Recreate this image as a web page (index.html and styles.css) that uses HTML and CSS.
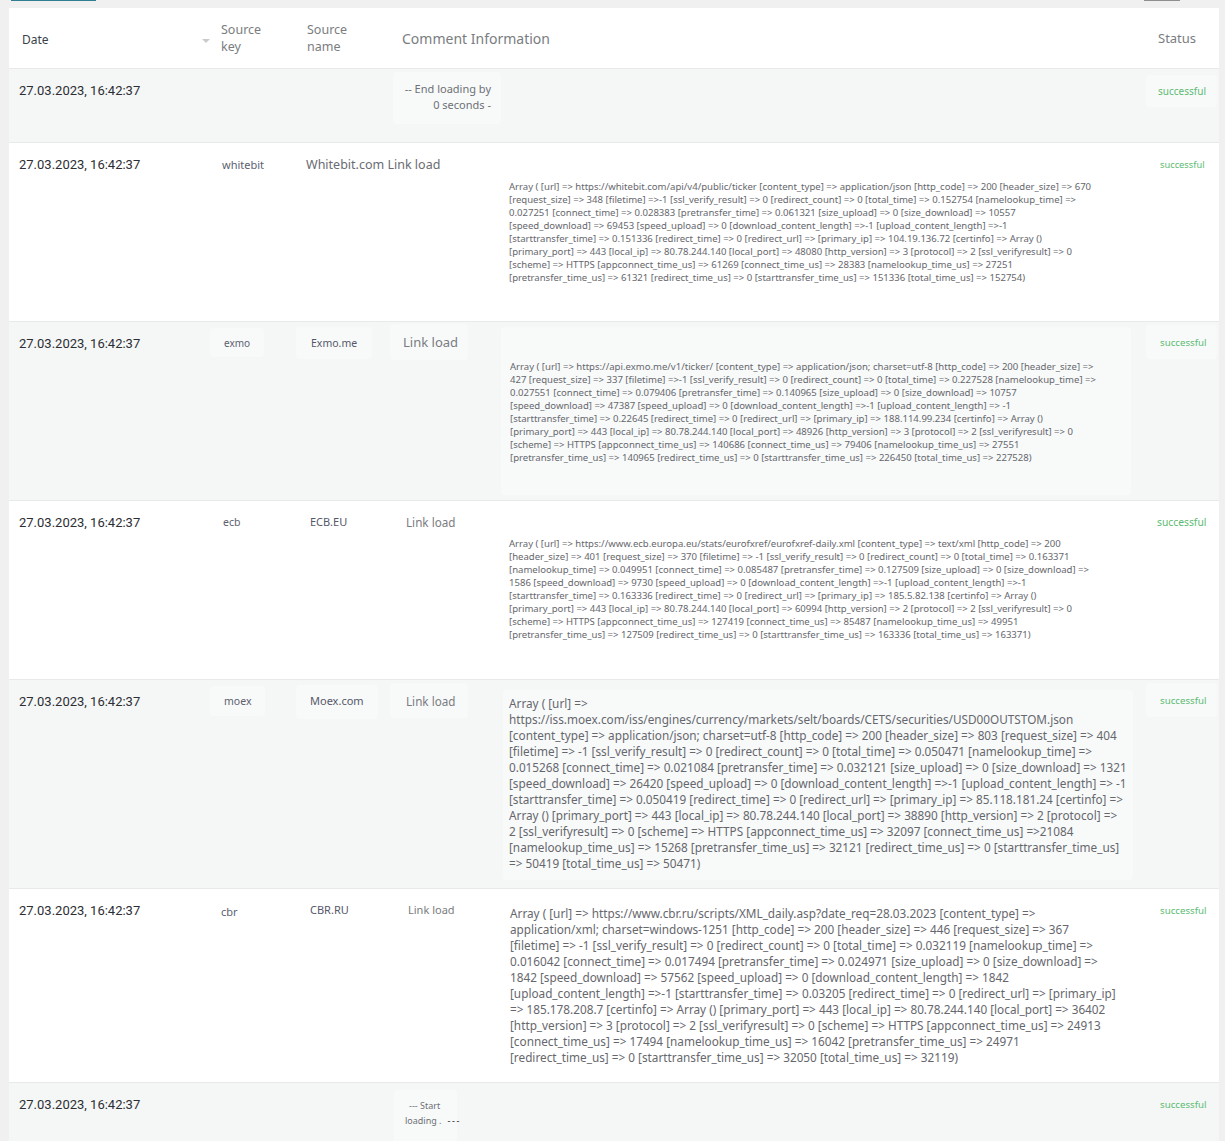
FILE: index.html
```html
<!DOCTYPE html>
<html lang="en">
<head>
<meta charset="utf-8">
<title>Loading log</title>
<link rel="stylesheet" href="styles.css">
</head>
<body>
<div class="stubs"><span class="stub stub-teal"></span><span class="stub stub-gray"></span></div>
<main class="table">
  <div class="row head">
    <div class="h-date">Date<span class="caret"></span></div>
    <div class="h-src">Source<br>key</div>
    <div class="h-src h-name">Source<br>name</div>
    <div class="h-comment">Comment Information</div>
    <div class="h-status">Status</div>
  </div>

  <div class="row alt r1">
    <div class="date">27.03.2023, 16:42:37</div>
    <div></div>
    <div></div>
    <div class="end-wrap"><span class="patch end">-- End loading by<br>0 seconds -</span></div>
    <div class="status-wrap"><span class="patch status s-a">successful</span></div>
  </div>

  <div class="row r2">
    <div class="date">27.03.2023, 16:42:37</div>
    <div class="key k-wb">whitebit</div>
    <div class="wb-name">Whitebit.com Link load</div>
    <div class="log small log-wb">Array ( [url] =&gt; https://whitebit.com/api/v4/public/ticker [content_type] =&gt; application/json [http_code] =&gt; 200 [header_size] =&gt; 670<br>[request_size] =&gt; 348 [filetime] =&gt;-1 [ssl_verify_result] =&gt; 0 [redirect_count] =&gt; 0 [total_time] =&gt; 0.152754 [namelookup_time] =&gt;<br>0.027251 [connect_time] =&gt; 0.028383 [pretransfer_time] =&gt; 0.061321 [size_upload] =&gt; 0 [size_download] =&gt; 10557<br>[speed_download] =&gt; 69453 [speed_upload] =&gt; 0 [download_content_length] =&gt;-1 [upload_content_length] =&gt;-1<br>[starttransfer_time] =&gt; 0.151336 [redirect_time] =&gt; 0 [redirect_url] =&gt; [primary_ip] =&gt; 104.19.136.72 [certinfo] =&gt; Array ()<br>[primary_port] =&gt; 443 [local_ip] =&gt; 80.78.244.140 [local_port] =&gt; 48080 [http_version] =&gt; 3 [protocol] =&gt; 2 [ssl_verifyresult] =&gt; 0<br>[scheme] =&gt; HTTPS [appconnect_time_us] =&gt; 61269 [connect_time_us] =&gt; 28383 [namelookup_time_us] =&gt; 27251<br>[pretransfer_time_us] =&gt; 61321 [redirect_time_us] =&gt; 0 [starttransfer_time_us] =&gt; 151336 [total_time_us] =&gt; 152754)</div>
    <div class="status-wrap"><span class="status s-b">successful</span></div>
  </div>

  <div class="row alt r3">
    <div class="date">27.03.2023, 16:42:37</div>
    <div class="key-wrap"><span class="patch key k-ex">exmo</span></div>
    <div class="name-wrap"><span class="patch name n-ex">Exmo.me</span></div>
    <div class="comment-col">
      <span class="patch link l-ex">Link load</span>
      <div class="patch log small log-ex">Array ( [url] =&gt; https://api.exmo.me/v1/ticker/ [content_type] =&gt; application/json; charset=utf-8 [http_code] =&gt; 200 [header_size] =&gt;<br>427 [request_size] =&gt; 337 [filetime] =&gt;-1 [ssl_verify_result] =&gt; 0 [redirect_count] =&gt; 0 [total_time] =&gt; 0.227528 [namelookup_time] =&gt;<br>0.027551 [connect_time] =&gt; 0.079406 [pretransfer_time] =&gt; 0.140965 [size_upload] =&gt; 0 [size_download] =&gt; 10757<br>[speed_download] =&gt; 47387 [speed_upload] =&gt; 0 [download_content_length] =&gt;-1 [upload_content_length] =&gt; -1<br>[starttransfer_time] =&gt; 0.22645 [redirect_time] =&gt; 0 [redirect_url] =&gt; [primary_ip] =&gt; 188.114.99.234 [certinfo] =&gt; Array ()<br>[primary_port] =&gt; 443 [local_ip] =&gt; 80.78.244.140 [local_port] =&gt; 48926 [http_version] =&gt; 3 [protocol] =&gt; 2 [ssl_verifyresult] =&gt; 0<br>[scheme] =&gt; HTTPS [appconnect_time_us] =&gt; 140686 [connect_time_us] =&gt; 79406 [namelookup_time_us] =&gt; 27551<br>[pretransfer_time_us] =&gt; 140965 [redirect_time_us] =&gt; 0 [starttransfer_time_us] =&gt; 226450 [total_time_us] =&gt; 227528)</div>
    </div>
    <div class="status-wrap"><span class="patch status s-c">successful</span></div>
  </div>

  <div class="row r4">
    <div class="date">27.03.2023, 16:42:37</div>
    <div class="key k-ec">ecb</div>
    <div class="name n-ec">ECB.EU</div>
    <div class="comment-col">
      <span class="link l-ec">Link load</span>
      <div class="log small log-ec">Array ( [url] =&gt; https://www.ecb.europa.eu/stats/eurofxref/eurofxref-daily.xml [content_type] =&gt; text/xml [http_code] =&gt; 200<br>[header_size] =&gt; 401 [request_size] =&gt; 370 [filetime] =&gt; -1 [ssl_verify_result] =&gt; 0 [redirect_count] =&gt; 0 [total_time] =&gt; 0.163371<br>[namelookup_time] =&gt; 0.049951 [connect_time] =&gt; 0.085487 [pretransfer_time] =&gt; 0.127509 [size_upload] =&gt; 0 [size_download] =&gt;<br>1586 [speed_download] =&gt; 9730 [speed_upload] =&gt; 0 [download_content_length] =&gt;-1 [upload_content_length] =&gt;-1<br>[starttransfer_time] =&gt; 0.163336 [redirect_time] =&gt; 0 [redirect_url] =&gt; [primary_ip] =&gt; 185.5.82.138 [certinfo] =&gt; Array ()<br>[primary_port] =&gt; 443 [local_ip] =&gt; 80.78.244.140 [local_port] =&gt; 60994 [http_version] =&gt; 2 [protocol] =&gt; 2 [ssl_verifyresult] =&gt; 0<br>[scheme] =&gt; HTTPS [appconnect_time_us] =&gt; 127419 [connect_time_us] =&gt; 85487 [namelookup_time_us] =&gt; 49951<br>[pretransfer_time_us] =&gt; 127509 [redirect_time_us] =&gt; 0 [starttransfer_time_us] =&gt; 163336 [total_time_us] =&gt; 163371)</div>
    </div>
    <div class="status-wrap"><span class="status s-d">successful</span></div>
  </div>

  <div class="row alt r5">
    <div class="date">27.03.2023, 16:42:37</div>
    <div class="key-wrap"><span class="patch key k-mo">moex</span></div>
    <div class="name-wrap"><span class="patch name n-mo">Moex.com</span></div>
    <div class="comment-col">
      <span class="patch link l-mo">Link load</span>
      <div class="patch log large log-mo">Array ( [url] =&gt;<br>https://iss.moex.com/iss/engines/currency/markets/selt/boards/CETS/securities/USD00OUTSTOM.json<br>[content_type] =&gt; application/json; charset=utf-8 [http_code] =&gt; 200 [header_size] =&gt; 803 [request_size] =&gt; 404<br>[filetime] =&gt; -1 [ssl_verify_result] =&gt; 0 [redirect_count] =&gt; 0 [total_time] =&gt; 0.050471 [namelookup_time] =&gt;<br>0.015268 [connect_time] =&gt; 0.021084 [pretransfer_time] =&gt; 0.032121 [size_upload] =&gt; 0 [size_download] =&gt; 1321<br>[speed_download] =&gt; 26420 [speed_upload] =&gt; 0 [download_content_length] =&gt;-1 [upload_content_length] =&gt; -1<br>[starttransfer_time] =&gt; 0.050419 [redirect_time] =&gt; 0 [redirect_url] =&gt; [primary_ip] =&gt; 85.118.181.24 [certinfo] =&gt;<br>Array () [primary_port] =&gt; 443 [local_ip] =&gt; 80.78.244.140 [local_port] =&gt; 38890 [http_version] =&gt; 2 [protocol] =&gt;<br>2 [ssl_verifyresult] =&gt; 0 [scheme] =&gt; HTTPS [appconnect_time_us] =&gt; 32097 [connect_time_us] =&gt;21084<br>[namelookup_time_us] =&gt; 15268 [pretransfer_time_us] =&gt; 32121 [redirect_time_us] =&gt; 0 [starttransfer_time_us]<br>=&gt; 50419 [total_time_us] =&gt; 50471)</div>
    </div>
    <div class="status-wrap"><span class="patch status s-e">successful</span></div>
  </div>

  <div class="row r6">
    <div class="date">27.03.2023, 16:42:37</div>
    <div class="key k-cb">cbr</div>
    <div class="name n-cb">CBR.RU</div>
    <div class="comment-col">
      <span class="link l-cb">Link load</span>
      <div class="log large log-cb">Array ( [url] =&gt; https://www.cbr.ru/scripts/XML_daily.asp?date_req=28.03.2023 [content_type] =&gt;<br>application/xml; charset=windows-1251 [http_code] =&gt; 200 [header_size] =&gt; 446 [request_size] =&gt; 367<br>[filetime] =&gt; -1 [ssl_verify_result] =&gt; 0 [redirect_count] =&gt; 0 [total_time] =&gt; 0.032119 [namelookup_time] =&gt;<br>0.016042 [connect_time] =&gt; 0.017494 [pretransfer_time] =&gt; 0.024971 [size_upload] =&gt; 0 [size_download] =&gt;<br>1842 [speed_download] =&gt; 57562 [speed_upload] =&gt; 0 [download_content_length] =&gt; 1842<br>[upload_content_length] =&gt;-1 [starttransfer_time] =&gt; 0.03205 [redirect_time] =&gt; 0 [redirect_url] =&gt; [primary_ip]<br>=&gt; 185.178.208.7 [certinfo] =&gt; Array () [primary_port] =&gt; 443 [local_ip] =&gt; 80.78.244.140 [local_port] =&gt; 36402<br>[http_version] =&gt; 3 [protocol] =&gt; 2 [ssl_verifyresult] =&gt; 0 [scheme] =&gt; HTTPS [appconnect_time_us] =&gt; 24913<br>[connect_time_us] =&gt; 17494 [namelookup_time_us] =&gt; 16042 [pretransfer_time_us] =&gt; 24971<br>[redirect_time_us] =&gt; 0 [starttransfer_time_us] =&gt; 32050 [total_time_us] =&gt; 32119)</div>
    </div>
    <div class="status-wrap"><span class="status s-f">successful</span></div>
  </div>

  <div class="row alt r7">
    <div class="date">27.03.2023, 16:42:37</div>
    <div></div>
    <div></div>
    <div class="start-wrap"><span class="patch start"><span class="start-top">--- Start</span><br>loading .<span class="tail"> ---</span></span></div>
    <div class="status-wrap"><span class="status s-g">successful</span></div>
  </div>
</main>
</body>
</html>
```
FILE: styles.css
```css
* { box-sizing: border-box; }
html, body { margin: 0; padding: 0; }
body {
  height: 1141px;
  overflow: hidden;
  background: #f0f0f0;
  font-family: "Noto Sans", "Open Sans", sans-serif;
  color: #666;
}
.stubs {
  height: 8px;
  display: flex;
  justify-content: space-between;
  align-items: flex-start;
  padding: 0 45px 0 11px;
}
.stub { display: block; height: 1px; }
.stub-teal { width: 85px; background: #2f7f90; }
.stub-gray { width: 36px; background: #8f8f8f; }
.table { width: 1210px; margin-left: 9px; background: #fff; }
.row {
  display: grid;
  grid-template-columns: 200px 88px 96px 752px 74px;
  border-bottom: 1px solid #e8eaea;
  background: #fff;
}
.alt { background: #f5f7f7; }
.head { height: 61px; }
.r1 { height: 74px; }
.r2, .r3, .r4 { height: 179px; }
.r5 { height: 209px; }
.r6 { height: 194px; }
.r7 { height: 58px; border-bottom: 0; }

.patch { background: #f8fafa; border-radius: 4px; }

.h-date { position: relative; padding: 24px 0 0 13px; font-size: 12px; line-height: 16px; color: #3a3f4a; }
.caret {
  position: absolute; left: 193px; top: 31px; width: 0; height: 0;
  border-left: 4px solid transparent; border-right: 4px solid transparent;
  border-top: 4px solid #c9cbce;
}
.h-src { padding: 13px 0 0 12px; font-size: 12.5px; line-height: 17px; color: #7a7d80; }
.h-name { padding-left: 10px; }
.h-comment { padding: 21px 0 0 9px; font-size: 14px; line-height: 20px; color: #7a7d80; }
.h-status { padding: 21px 0 0 13px; font-size: 13px; line-height: 18px; color: #7a7d80; }

.date { padding: 14px 0 0 10px; font: 13px/16px Roboto, sans-serif; color: #2c2e33; }

.key { font-size: 10.5px; line-height: 15px; color: #5d5f70; display: block; }
.name { font-size: 10.5px; line-height: 16px; color: #55586a; display: block; }
.link { font-size: 11.7px; line-height: 16px; color: #7a7c80; display: block; }
.key-wrap, .name-wrap { display: flex; align-items: flex-start; }

.k-wb { padding: 14px 0 0 13px; font-size: 11px; }
.wb-name { padding-top: 13px; margin-left: 9px; font-size: 12.5px; line-height: 17px; color: #6a6c72; white-space: nowrap; }

.k-ex { margin: 6px 0 0 1px; padding: 8px 14px 6px 14px; font-size: 10px; }
.n-ex { margin: 5px 0 0 -1px; padding: 8px 15px; }
.l-ex { font-size: 13px; line-height: 18px; width: 78px; margin: 2px 0 0 -3px; padding: 9px 0 9px 13px; }
.log-ex { margin: -33px 0 0 108px; width: 630px; padding: 33px 0 0 9px; height: 168px; }

.k-ec { padding: 14px 0 0 14px; }
.n-ec { padding: 13px 0 0 13px; font-size: 11px; }
.l-ec { padding: 13px 0 0 13px; }
.log-ec { margin-top: 7px; margin-left: 116px; }

.k-mo { margin: 6px 0 0 1px; padding: 8px 14px 7px 14px; }
.n-mo { margin: 5px 0 0 -1px; padding: 8px 14px 10px 14px; font-size: 11px; }
.l-mo { width: 78px; margin: 3px 0 0 -3px; padding: 10px 0 9px 16px; }
.log-mo { margin: -28px 0 0 110px; width: 630px; padding: 5px 0 0 6px; height: 190px; }

.k-cb { padding: 15px 0 0 12px; font-size: 11px; }
.n-cb { padding: 13px 0 0 13px; font-size: 11px; }
.l-cb { padding: 13px 0 0 15px; font-size: 11px; }
.log-cb { margin-top: -13px; margin-left: 117px; }

.log { white-space: nowrap; color: #66676d; }
.small { font-size: 9.55px; line-height: 13px; }
.large { font-size: 11.78px; line-height: 16px; }
.log-wb { grid-column: 4; padding: 37px 0 0 116px; }

.end-wrap { padding: 3px 0 0 0; display: flex; align-items: flex-start; }
.end {
  display: block; width: 108px; padding: 9px 10px 11px 0; text-align: right;
  font-size: 11px; line-height: 16px; color: #6e7075;
}
.start-wrap { padding: 7px 0 0 1px; }
.start {
  display: inline-block; padding: 8px 0 17px 11px; width: 63px;
  font-size: 9px; line-height: 15px; color: #6e7075; white-space: nowrap;
}
.start-top { margin-left: 4px; }
.tail { color: #222; letter-spacing: 1.6px; margin-left: 2px; }

.status-wrap { display: flex; align-items: flex-start; }
.status { display: block; color: #5cbb72; line-height: 14px; font-size: 9.7px; white-space: nowrap; }
.s-a { width: 71px; margin: 6px 0 0 1px; padding: 9px 0 9px 12px; font-size: 10px; }
.s-b { padding: 15px 0 0 15px; font-size: 9.3px; }
.s-c { width: 71px; margin: 3px 0 0 1px; padding: 11px 0 9px 14px; }
.s-d { padding: 14px 0 0 12px; font-size: 10.3px; }
.s-e { width: 71px; margin: 3px 0 0 1px; padding: 11px 0 9px 14px; }
.s-f { padding: 15px 0 0 15px; }
.s-g { padding: 15px 0 0 15px; }
```
